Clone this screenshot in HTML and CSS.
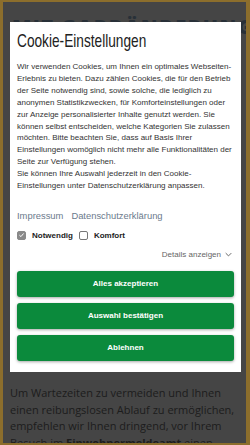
FILE: index.html
```html
<!DOCTYPE html>
<html lang="de">
<head>
<meta charset="utf-8">
<link rel="stylesheet" href="styles.css">
</head>
<body>
<div class="frame">
  <header class="site-header">
    <div class="logo">MIT GARDÄNDERUNG</div>
    <div class="burger"><span></span><span></span><span></span></div>
  </header>
  <main class="content">
    <p>Um Wartezeiten zu vermeiden und Ihnen einen reibungslosen Ablauf zu ermöglichen, empfehlen wir Ihnen dringend, vor Ihrem Besuch im <b>Einwohnermeldeamt</b> einen Termin zu vereinbaren.</p>
  </main>
</div>

<div class="overlay">
  <div class="modal">
    <h2 class="title">Cookie-Einstellungen</h2>
    <p class="text">Wir verwenden Cookies, um Ihnen ein optimales Webseiten-Erlebnis zu bieten. Dazu zählen Cookies, die für den Betrieb der Seite notwendig sind, sowie solche, die lediglich zu anonymen Statistikzwecken, für Komforteinstellungen oder zur Anzeige personalisierter Inhalte genutzt werden. Sie können selbst entscheiden, welche Kategorien Sie zulassen möchten. Bitte beachten Sie, dass auf Basis Ihrer Einstellungen womöglich nicht mehr alle Funktionalitäten der Seite zur Verfügung stehen.<br>Sie können Ihre Auswahl jederzeit in den Cookie-Einstellungen unter Datenschutzerklärung anpassen.</p>
    <div class="links"><a>Impressum</a><a>Datenschutzerklärung</a></div>
    <div class="checks">
      <label class="check"><span class="box checked"><svg viewBox="0 0 10 10" width="8" height="8"><path d="M2 5.2 L4.2 7.3 L8 2.8" fill="none" stroke="#fff" stroke-width="1.4"/></svg></span>Notwendig</label>
      <label class="check"><span class="box"></span>Komfort</label>
    </div>
    <div class="details">Details anzeigen <svg viewBox="0 0 10 6" width="7" height="5"><path d="M1 1 L5 5 L9 1" fill="none" stroke="#666" stroke-width="1.4"/></svg></div>
    <div class="buttons">
      <button class="btn">Alles akzeptieren</button>
      <button class="btn">Auswahl bestätigen</button>
      <button class="btn">Ablehnen</button>
    </div>
  </div>
</div>
</body>
</html>
```

FILE: styles.css
```css
html, body {
  margin: 0;
  padding: 0;
  height: 100%;
  overflow: hidden;
}
body {
  background: #8c6e2c;
}
.frame {
  box-sizing: border-box;
  height: 441px;
  margin: 2px 4px 2px 3px;
  background: #454545;
  overflow: hidden;
}
.site-header {
  display: flex;
  justify-content: space-between;
  align-items: flex-start;
  padding: 11px 15px 0 9px;
  height: 60px;
}
.logo {
  font-family: "Open Sans", sans-serif;
  font-weight: 800;
  font-size: 20px;
  color: #283038;
  letter-spacing: 1.5px;
  white-space: nowrap;
}
.burger {
  display: flex;
  flex-direction: column;
  gap: 5px;
  padding-top: 17px;
}
.burger span {
  display: block;
  width: 24px;
  height: 3px;
  background: #262626;
}
.content {
  padding: 312px 7px 0 7px;
}
.content p {
  margin: 0;
  font-family: "Open Sans", sans-serif;
  font-size: 11px;
  line-height: 16.5px;
  color: #1c1c1c;
}
.content b {
  font-weight: 700;
}

.overlay {
  position: fixed;
  inset: 0;
  display: flex;
  justify-content: center;
  padding-top: 22px;
}
.modal {
  box-sizing: border-box;
  width: 231px;
  height: 350px;
  margin-left: 1px;
  background: #fff;
  padding: 6px 7px 10px 7px;
  font-family: "Liberation Sans", Arial, sans-serif;
}
.title {
  margin: 0;
  font-family: "Liberation Sans", sans-serif;
  font-weight: 400;
  font-size: 19px;
  line-height: 26px;
  color: #222;
  transform: scaleX(0.72);
  transform-origin: left center;
  white-space: nowrap;
}
.text {
  margin: 7px 0 0 0;
  font-size: 8px;
  line-height: 11.9px;
  color: #333;
}
.links {
  display: flex;
  gap: 8px;
  margin-top: 17px;
  font-size: 9.4px;
  line-height: 14px;
  color: #6b7a8c;
}
.checks {
  display: flex;
  align-items: center;
  gap: 6px;
  margin-top: 8px;
}
.check {
  display: flex;
  align-items: center;
  gap: 6px;
  font-size: 8px;
  font-weight: 700;
  color: #222;
}
.box {
  box-sizing: border-box;
  width: 9px;
  height: 9px;
  border: 1px solid #777;
  border-radius: 2px;
  background: #fff;
  display: flex;
  align-items: center;
  justify-content: center;
}
.box.checked {
  background: #8a8a8a;
  border-color: #8a8a8a;
}
.details {
  display: flex;
  justify-content: flex-end;
  align-items: center;
  gap: 4px;
  margin-top: 10px;
  padding-right: 2px;
  font-size: 8px;
  color: #666;
}
.buttons {
  display: flex;
  flex-direction: column;
  gap: 6px;
  margin-top: 12px;
}
.btn {
  height: 26px;
  border: none;
  border-radius: 3px;
  background: #0b8a3c;
  color: #fff;
  font-family: "Liberation Sans", Arial, sans-serif;
  font-weight: 700;
  font-size: 8px;
  box-shadow: 0 1px 3px rgba(0,0,0,.35);
  padding: 0;
}
```
